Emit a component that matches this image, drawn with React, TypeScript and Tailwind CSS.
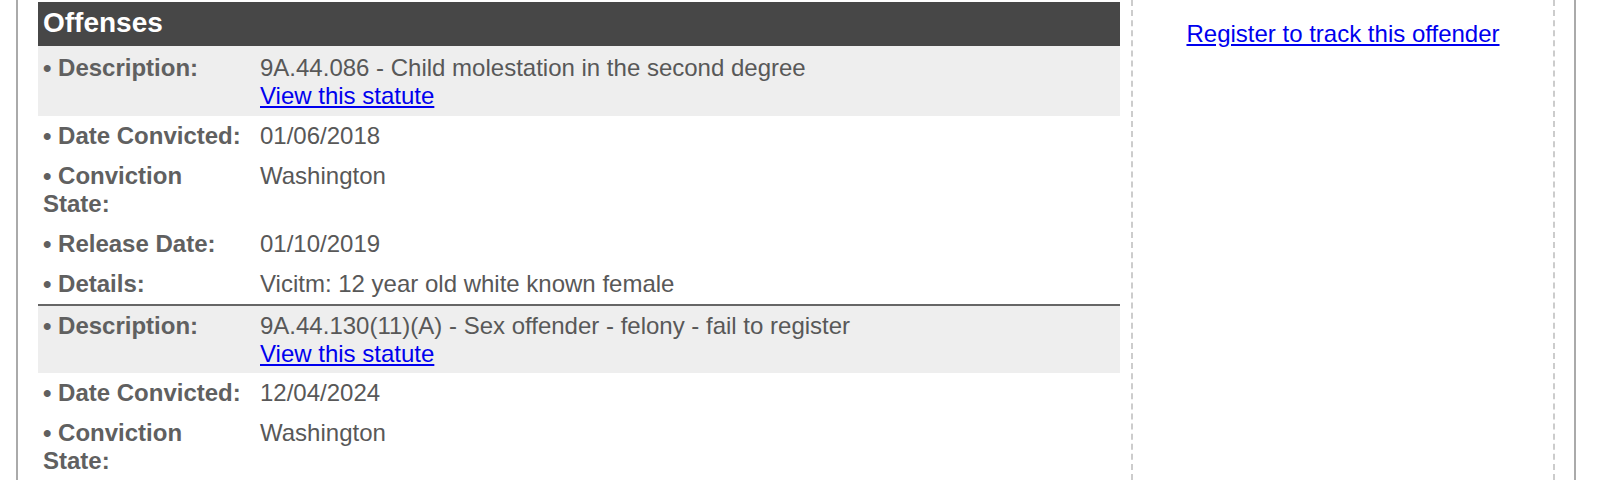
import React from 'react'

type Field = { label: string; value: string; statute?: boolean; shaded?: boolean }

const offenses: Field[][] = [
  [
    { label: 'Description:', value: '9A.44.086 - Child molestation in the second degree', statute: true, shaded: true },
    { label: 'Date Convicted:', value: '01/06/2018' },
    { label: 'Conviction State:', value: 'Washington' },
    { label: 'Release Date:', value: '01/10/2019' },
    { label: 'Details:', value: 'Vicitm: 12 year old white known female' },
  ],
  [
    { label: 'Description:', value: '9A.44.130(11)(A) - Sex offender - felony - fail to register', statute: true, shaded: true },
    { label: 'Date Convicted:', value: '12/04/2024' },
    { label: 'Conviction State:', value: 'Washington' },
  ],
]

function Row({ field, first }: { field: Field; first: boolean }) {
  return (
    <div
      className={
        'flex ' +
        (field.shaded ? 'bg-[#eeeeee] ' : '') +
        (field.shaded ? (first ? 'pt-[8px] pb-[6px]' : 'pt-[6px] pb-[5px]') : 'py-[6px]')
      }
    >
      <div className="w-[222px] shrink-0 pl-[5px] pr-[12px] font-bold text-[#606060]">
        • {field.label}
      </div>
      <div className="flex-1 min-w-0 text-[#585858]">
        <div>{field.value}</div>
        {field.statute && (
          <a href="#" className="text-[#0000ee] underline">
            View this statute
          </a>
        )}
      </div>
    </div>
  )
}

export default function App() {
  return (
    <div
      className="h-[480px] overflow-hidden bg-white text-[24px] leading-[28px]"
      style={{ fontFamily: '"Liberation Sans", Arial, Helvetica, sans-serif' }}
    >
      <div className="ml-[16px] w-[1560px] h-full flex border-l-2 border-r-2 border-[#aaaaaa] pl-[20px] pr-[19px]">
        {/* Offenses */}
        <div className="w-[1082px] shrink-0 pt-[2px]">
          <div className="h-[44px] bg-[#474747] pl-[5px] text-[28px] leading-[42px] font-bold text-white">
            Offenses
          </div>
          {offenses.map((group, gi) => (
            <div key={gi} className={gi > 0 ? 'border-t-2 border-[#666666]' : ''}>
              {group.map((field, fi) => (
                <Row key={fi} field={field} first={gi === 0} />
              ))}
            </div>
          ))}
        </div>

        {/* Sidebar */}
        <div className="ml-[11px] w-[424px] shrink-0 border-x-2 border-dashed border-[#cccccc] pt-[20px] text-center">
          <a href="#" className="text-[#0000ee] underline">
            Register to track this offender
          </a>
        </div>
      </div>
    </div>
  )
}
